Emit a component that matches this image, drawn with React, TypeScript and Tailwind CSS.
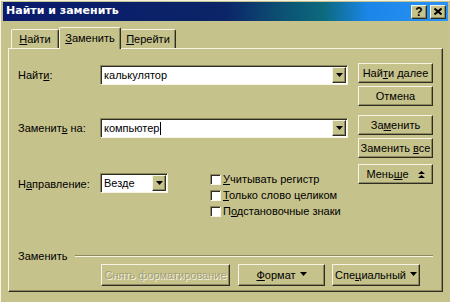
import React from "react";

const raised =
  "border border-t-[#f6f4e4] border-l-[#f6f4e4] border-r-[#2e2d22] border-b-[#2e2d22] shadow-[inset_-1px_-1px_0_#8d895f]";
const sunken =
  "border border-t-[#8d895f] border-l-[#8d895f] border-r-[#f6f4e4] border-b-[#f6f4e4] shadow-[inset_1px_1px_0_#2e2d22]";

function Arrow() {
  return (
    <svg width="7" height="4" viewBox="0 0 7 4" className="block">
      <path d="M0 0h7L3.5 4z" fill="#000" />
    </svg>
  );
}

function DropBtn() {
  return (
    <div className={`${raised} w-[14px] h-full bg-[#c6c28b] flex items-center justify-center`}>
      <Arrow />
    </div>
  );
}

function Combo({ value, w, caret }: { value: string; w: string; caret?: boolean }) {
  return (
    <div className={`${sunken} ${w} h-[20px] bg-white flex items-stretch p-[1px] pl-[2px]`}>
      <div className="flex-1 flex items-center pl-[1px] text-black">
        {value}
        {caret && <span className="inline-block w-[1px] h-[13px] bg-black ml-[1px]" />}
      </div>
      <DropBtn />
    </div>
  );
}

function Btn({ children, className = "" }: { children: React.ReactNode; className?: string }) {
  return (
    <div className={`${raised} bg-[#c6c28b] flex items-center justify-center text-black ${className}`}>
      {children}
    </div>
  );
}

function Check({ children }: { children: React.ReactNode }) {
  return (
    <div className="h-[16px] flex items-center">
      <div className={`${sunken} w-[11px] h-[11px] bg-white`} />
      <span className="ml-[2px]">{children}</span>
    </div>
  );
}

export default function App() {
  return (
    <div
      className="w-[450px] h-[302px] bg-[#c6c28b] pt-[1px] px-[2px] flex flex-col text-[11px] text-black overflow-hidden border-l border-t border-[#f6f4e4]"
      style={{ fontFamily: '"Liberation Sans", Arial, sans-serif' }}
    >
      {/* Title bar */}
      <div className="h-[19px] shrink-0 flex items-center pl-[3px] pr-[2px] bg-[linear-gradient(to_right,#0a1a6c_0%,#0b2568_50%,#0c4f73_62%,#0c6a7d_72%,#1b86e8_82%,#2a92f6_100%)]">
        <span
          className="text-white font-bold text-[11px]"
          style={{ fontFamily: '"DejaVu Sans", Verdana, sans-serif' }}
        >
          Найти и заменить
        </span>
        <div className="ml-auto flex gap-[3px]">
          <div className={`${raised} w-[16px] h-[14px] bg-[#c6c28b] flex items-center justify-center font-bold text-[12px] leading-none`}>
            ?
          </div>
          <div className={`${raised} w-[16px] h-[14px] bg-[#c6c28b] flex items-center justify-center`}>
            <svg width="8" height="7" viewBox="0 0 8 7">
              <path d="M0.5 0.5L7.5 6.5M7.5 0.5L0.5 6.5" stroke="#000" strokeWidth="2" />
            </svg>
          </div>
        </div>
      </div>

      <div className="flex-1 flex flex-col px-[5px] pt-[6px] pb-[10px]">
        {/* Tabs */}
        <div className="h-[21px] shrink-0 flex items-end pl-[3px] relative z-10">
          <div className="h-[19px] w-[48px] border-t border-l border-[#f6f4e4] border-r border-r-[#2e2d22] shadow-[inset_-1px_0_0_#8d895f] rounded-t-[2px] flex items-center justify-center">
            <span><u>Н</u>айти</span>
          </div>
          <div className="h-[22px] w-[62px] -mb-[1px] bg-[#c6c28b] border-t border-l border-[#f6f4e4] border-r border-r-[#2e2d22] shadow-[inset_-1px_0_0_#8d895f] rounded-t-[2px] flex items-center justify-center pb-[1px]">
            <span><u>З</u>аменить</span>
          </div>
          <div className="h-[19px] w-[55px] border-t border-[#f6f4e4] border-r border-r-[#2e2d22] shadow-[inset_-1px_0_0_#8d895f] rounded-t-[2px] flex items-center justify-center">
            <span><u>П</u>ерейти</span>
          </div>
        </div>

        {/* Panel */}
        <div className={`flex-1 flex flex-col ${raised} pl-[9px] pr-[9px] pb-[5px]`}>
          <div className="flex gap-[10px]">
            {/* Left */}
            <div className="flex flex-col pt-[16px]">
              <div className="h-[20px] flex items-center">
                <span className="w-[82px]">Найт<u>и</u>:</span>
                <Combo value="калькулятор" w="w-[248px]" />
              </div>
              <div className="h-[20px] flex items-center mt-[33px]">
                <span className="w-[82px]">Заменит<u>ь</u> на:</span>
                <Combo value="компьютер" w="w-[248px]" caret />
              </div>
              <div className="flex items-start mt-[33px]">
                <span className="w-[82px] mt-[5px]">Н<u>а</u>правление:</span>
                <div className="mt-[2px]">
                  <Combo value="Везде" w="w-[68px]" />
                </div>
                <div className="ml-[42px] flex flex-col">
                  <Check><u>У</u>читывать регистр</Check>
                  <Check><u>Т</u>олько слово целиком</Check>
                  <Check>П<u>о</u>дстановочные знаки</Check>
                </div>
              </div>
            </div>
            {/* Right buttons */}
            <div className="flex flex-col pt-[14px] w-[76px]">
              <Btn className="h-[20px]"><span>Най<u>т</u>и далее</span></Btn>
              <Btn className="h-[20px] mt-[3px]">Отмена</Btn>
              <Btn className="h-[20px] mt-[9px]"><span>За<u>м</u>енить</span></Btn>
              <Btn className="h-[20px] mt-[3px]"><span>Заменить <u>в</u>се</span></Btn>
              <Btn className="h-[20px] mt-[6px]">
                <span>Мень<u>ш</u>е</span>
                <svg width="7" height="7" viewBox="0 0 7 7" className="ml-[9px]">
                  <path d="M3.5 0L7 3H0z M3.5 4L7 7H0z" fill="#000" />
                </svg>
              </Btn>
            </div>
          </div>

          {/* Bottom */}
          <div className="mt-auto flex flex-col">
            <div className="h-[14px] flex items-center">
              <span>Заменить</span>
              <div className="flex-1 ml-[8px] h-[2px] border-t border-[#8d895f] border-b border-b-[#f6f4e4]" />
            </div>
            <div className="flex mt-[1px] ml-[83px] h-[22px] gap-[8px]">
              <Btn className="w-[129px] h-full">
                <span className="text-[#a29f78] [text-shadow:1px_1px_0_#f6f4e4]">Снять форматирование</span>
              </Btn>
              <Btn className="w-[87px] h-full">
                <span><u>Ф</u>ормат</span>
                <span className="ml-[4px] -mt-[3px]"><Arrow /></span>
              </Btn>
              <Btn className="w-[88px] h-full -ml-[1px]">
                <span>Спе<u>ц</u>иальный</span>
                <span className="ml-[4px] -mt-[3px]"><Arrow /></span>
              </Btn>
            </div>
          </div>
        </div>
      </div>
    </div>
  );
}
